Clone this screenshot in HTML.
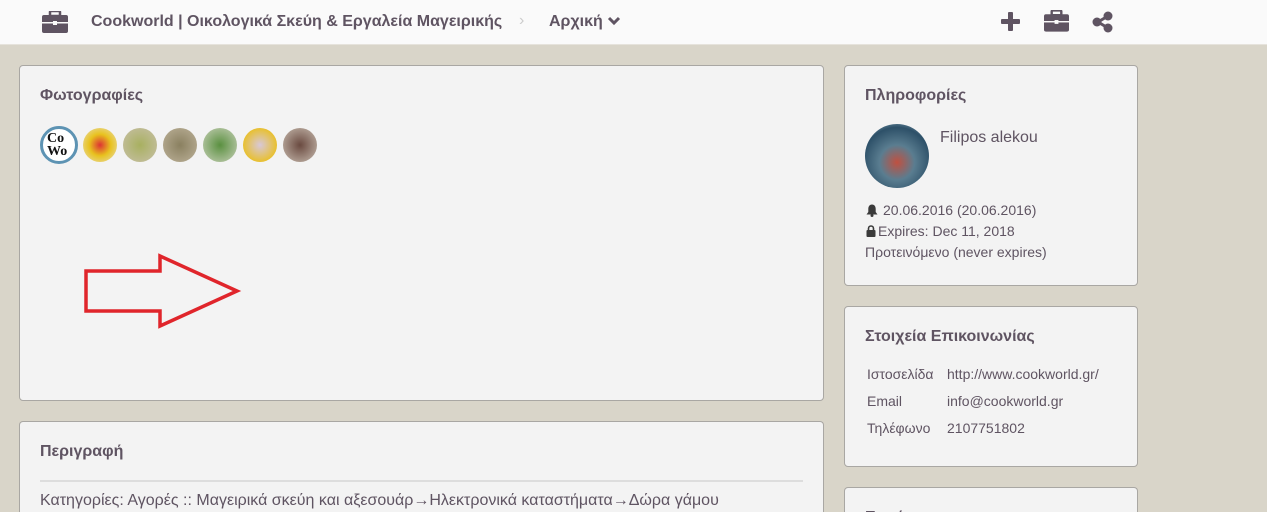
<!DOCTYPE html>
<html><head><meta charset="utf-8"><style>
html,body{margin:0;width:1267px;height:512px;overflow:hidden}
body{background:#d9d5c9;font-family:"Liberation Sans",sans-serif;color:#5f5462;position:relative}
.hdr{position:absolute;left:0;top:0;width:1267px;height:44px;background:#fafafa;border-bottom:1px solid #e6e3dc}
.p{position:absolute;background:#f3f3f3;border:1px solid #a9a7a3;border-radius:4px;box-sizing:border-box;overflow:hidden}
.b{border-bottom:none;border-radius:4px 4px 0 0}
h3{margin:0;font-size:16px;font-weight:bold;color:#5f5462;position:absolute;left:20px;top:21px}
.t{position:absolute;font-size:14px;white-space:nowrap}
.c{position:absolute;top:128px;width:34px;height:34px;border-radius:50%}
</style></head><body>
<div class="hdr">
<svg style="position:absolute;left:42px;top:11px" width="26" height="22" viewBox="0 0 26 22"><rect x="8" y="0" width="10" height="5" rx="1" fill="none" stroke="#5f5462" stroke-width="2.5"/><rect x="0" y="4" width="26" height="18" rx="2" fill="#5f5462"/><rect x="0" y="11" width="26" height="1.5" fill="#fafafa"/><rect x="11" y="10" width="4" height="4" fill="#fafafa"/></svg>
<div class="t" style="left:91px;top:13px;font-size:16px;font-weight:bold">Cookworld | Οικολογικά Σκεύη &amp; Εργαλεία Μαγειρικής</div>
<div class="t" style="left:519px;top:12px;font-size:16px;color:#ccc">›</div>
<div class="t" style="left:549px;top:13px;font-size:16px;font-weight:bold">Αρχική <svg width="14" height="10" viewBox="0 0 14 10"><path d="M2 2l5 5 5-5" fill="none" stroke="#5f5462" stroke-width="3"/></svg></div>
<svg style="position:absolute;left:1001px;top:12px" width="19" height="19"><rect x="7" y="0" width="5" height="19" rx="1" fill="#5f5462"/><rect x="0" y="7" width="19" height="5" rx="1" fill="#5f5462"/></svg>
<svg style="position:absolute;left:1044px;top:10px" width="25" height="22" viewBox="0 0 26 22"><rect x="8" y="0" width="10" height="5" rx="1" fill="none" stroke="#5f5462" stroke-width="2.5"/><rect x="0" y="4" width="26" height="18" rx="2" fill="#5f5462"/><rect x="0" y="11" width="26" height="1.5" fill="#fafafa"/><rect x="11" y="10" width="4" height="4" fill="#fafafa"/></svg>
<svg style="position:absolute;left:1092px;top:11px" width="22" height="22"><path d="M16 5L6 11l10 6" stroke="#5f5462" stroke-width="3" fill="none"/><circle cx="16" cy="5" r="4.5" fill="#5f5462"/><circle cx="5" cy="11" r="4.5" fill="#5f5462"/><circle cx="16" cy="17" r="4.5" fill="#5f5462"/></svg>
</div>
<div class="p" style="left:19px;top:65px;width:805px;height:336px">
<h3>Φωτογραφίες</h3>
</div>
<div class="c" style="left:40px;top:126px;width:38px;height:38px;background:#fff;border:3px solid #5d93b3;box-sizing:border-box;font:bold 14px 'Liberation Serif';color:#111;line-height:13px;padding:3px 0 0 4px">Co<br>Wo</div>
<div class="c" style="left:83px;background:radial-gradient(circle,#d33 0,#e8c21e 45%,#e9e0c0 100%)"></div>
<div class="c" style="left:123px;background:radial-gradient(circle,#a8b060,#c8c0a8)"></div>
<div class="c" style="left:163px;background:radial-gradient(circle,#8a8060,#bdb29a)"></div>
<div class="c" style="left:203px;background:radial-gradient(circle,#5a9040,#c8d0b8)"></div>
<div class="c" style="left:243px;background:radial-gradient(circle,#d8c8d8 0,#e8c030 70%)"></div>
<div class="c" style="left:283px;background:radial-gradient(circle,#6a4a40,#c8bcb0)"></div>
<svg style="position:absolute;left:80px;top:250px" width="165" height="80"><path d="M6 21H80V6L157 41 80 76V61H6Z" fill="none" stroke="#e0252b" stroke-width="3.5"/></svg>
<div class="p b" style="left:19px;top:421px;width:805px;height:91px">
<h3 style="top:21px">Περιγραφή</h3>
<div style="position:absolute;left:20px;right:20px;top:58px;border-top:2px solid #ddd"></div>
<div class="t" style="left:20px;top:70px;font-size:16px">Κατηγορίες: Αγορές :: Μαγειρικά σκεύη και αξεσουάρ→Ηλεκτρονικά καταστήματα→Δώρα γάμου</div>
</div>
<div class="p" style="left:844px;top:65px;width:294px;height:221px">
<h3>Πληροφορίες</h3>
<div style="position:absolute;left:20px;top:58px;width:64px;height:64px;border-radius:50%;background:radial-gradient(circle at 50% 60%,#c05040 0,#5a7d90 35%,#2d5068 70%,#a9c8d5 100%)"></div>
<div class="t" style="left:95px;top:63px;font-size:16px">Filipos alekou</div>
<svg style="position:absolute;left:21px;top:138px" width="12" height="13" viewBox="0 0 12 13"><path d="M6 0.5C3.5 .5 2.3 2.5 2.3 5V8L0.5 10.5H11.5L9.7 8V5C9.7 2.5 8.5 .5 6 .5Z" fill="#3a3a3a"/><circle cx="6" cy="11.5" r="1.5" fill="#3a3a3a"/></svg>
<div class="t" style="left:38px;top:136px">20.06.2016 (20.06.2016)</div>
<svg style="position:absolute;left:21px;top:159px" width="10" height="12" viewBox="0 0 10 12"><path d="M2.5 5V3.5a2.5 2.5 0 0 1 5 0V5" fill="none" stroke="#3a3a3a" stroke-width="1.6"/><rect x="0.5" y="5" width="9" height="7" rx="1" fill="#3a3a3a"/></svg>
<div class="t" style="left:33px;top:157px">Expires: Dec 11, 2018</div>
<div class="t" style="left:20px;top:178px">Προτεινόμενο (never expires)</div>
</div>
<div class="p" style="left:844px;top:306px;width:294px;height:161px">
<h3>Στοιχεία Επικοινωνίας</h3>
<div class="t" style="left:22px;top:59px">Ιστοσελίδα</div><div class="t" style="left:102px;top:59px">http://www.cookworld.gr/</div>
<div class="t" style="left:22px;top:86px">Email</div><div class="t" style="left:102px;top:86px">info@cookworld.gr</div>
<div class="t" style="left:22px;top:113px">Τηλέφωνο</div><div class="t" style="left:102px;top:113px">2107751802</div>
</div>
<div class="p b" style="left:844px;top:487px;width:294px;height:25px"><h3>Ετικέτες</h3></div>
</body></html>
